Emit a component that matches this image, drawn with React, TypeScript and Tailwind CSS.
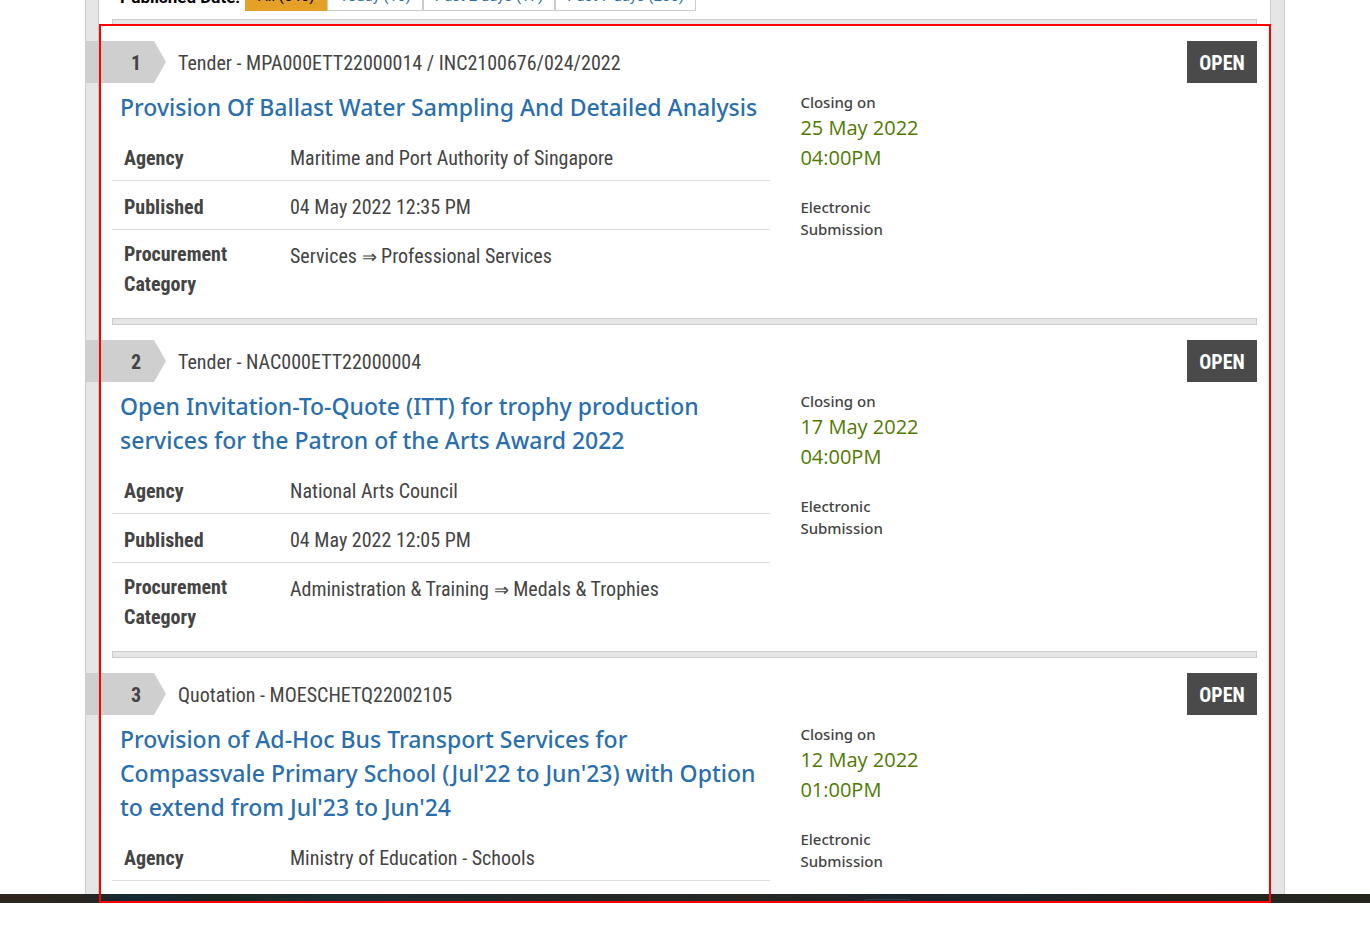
import React from "react";

type Tender = {
  no: number;
  ref: string;
  title: string;
  agency: string;
  published?: string;
  category?: [string, string];
  date: string;
  time: string;
};

const tenders: Tender[] = [
  {
    no: 1,
    ref: "Tender - MPA000ETT22000014 / INC2100676/024/2022",
    title: "Provision Of Ballast Water Sampling And Detailed Analysis",
    agency: "Maritime and Port Authority of Singapore",
    published: "04 May 2022 12:35 PM",
    category: ["Services", "Professional Services"],
    date: "25 May 2022",
    time: "04:00PM",
  },
  {
    no: 2,
    ref: "Tender - NAC000ETT22000004",
    title: "Open Invitation-To-Quote (ITT) for trophy production services for the Patron of the Arts Award 2022",
    agency: "National Arts Council",
    published: "04 May 2022 12:05 PM",
    category: ["Administration & Training", "Medals & Trophies"],
    date: "17 May 2022",
    time: "04:00PM",
  },
  {
    no: 3,
    ref: "Quotation - MOESCHETQ22002105",
    title: "Provision of Ad-Hoc Bus Transport Services for Compassvale Primary School (Jul'22 to Jun'23) with Option to extend from Jul'23 to Jun'24",
    agency: "Ministry of Education - Schools",
    date: "12 May 2022",
    time: "01:00PM",
  },
];

const filters = [
  { label: "All (646)", active: true },
  { label: "Today (16)", active: false },
  { label: "Past 2 days (17)", active: false },
  { label: "Past 7 days (266)", active: false },
];

function Separator() {
  return <div className="h-[7px] border border-[#cccccc] bg-[#e6e6e6]" />;
}

function TenderItem({ item }: { item: Tender }) {
  return (
    <article>
      <Separator />
      <header className="mt-[15px] flex h-[42px] items-center text-xl">
        <span className="-ml-[26px] flex h-full w-20 items-center bg-[#cfcfcf] pt-0.5 pl-[45px] font-bold [clip-path:polygon(0_0,85%_0,100%_50%,85%_100%,0_100%)]">
          {item.no}
        </span>
        <span className="ml-3 flex-1 pt-0.5">{item.ref}</span>
        <span className="flex h-full w-[70px] items-center justify-center bg-[#4a4a4a] pt-0.5 font-bold text-white">OPEN</span>
      </header>
      <div className="mt-[7px] flex">
        <div className="w-[57.5%]">
          <h2 className="pl-2 font-['Noto_Sans',sans-serif] text-[23px] leading-[34px] font-medium">
            <a href="#" className="text-[#2a6fad]">{item.title}</a>
          </h2>
          <table className="mt-2 w-full text-left text-xl leading-[30px]">
            <tbody>
              <tr className="border-b border-[#dddddd]">
                <th scope="row" className="w-[170px] px-3 pt-[11px] pb-[7px] align-top font-bold">Agency</th>
                <td className="px-2 pt-[11px] pb-[7px] align-top">{item.agency}</td>
              </tr>
              {item.published && (
                <tr className="border-b border-[#dddddd]">
                  <th scope="row" className="px-3 pt-[11px] pb-[7px] font-bold">Published</th>
                  <td className="px-2 pt-[11px] pb-[7px]">{item.published}</td>
                </tr>
              )}
              {item.category && (
                <tr>
                  <th scope="row" className="px-3 pt-[9px] pb-[19px] align-top font-bold">Procurement Category</th>
                  <td className="px-2 pt-[11px] align-top">
                    {item.category[0]} <span className="font-['Liberation_Serif',serif] text-lg leading-none">⇒</span> {item.category[1]}
                  </td>
                </tr>
              )}
            </tbody>
          </table>
        </div>
        <div className="ml-[30px] w-[124px] pt-px font-['Noto_Sans',sans-serif] text-[15px] leading-[22px] font-medium">
          <p>Closing on</p>
          <p className="font-['Open_Sans',sans-serif] text-xl leading-[30px] font-normal text-[#507a00]">
            {item.date} {item.time}
          </p>
          <p className="mt-[23px]">Electronic Submission</p>
        </div>
      </div>
    </article>
  );
}

export default function App() {
  return (
    <div className="bg-white font-['Roboto_Condensed','Roboto',sans-serif] text-[#444444]">
      <div className="relative mx-auto max-w-[1200px] border-x border-[#cccccc] bg-[#e6e6e6] pr-[13px] pl-3">
        <main className="border-x border-[#cccccc] bg-white px-[13px] pb-[13px]">
          <nav className="flex h-[11px] items-end overflow-hidden pl-2 font-['Roboto',sans-serif] text-[15px] leading-7 text-[#2a6fad]">
            <span className="w-[125px] text-[17px] font-bold text-black">Published Date:</span>
            {filters.map((f) => (
              <a
                key={f.label}
                href="#"
                className={
                  f.active
                    ? "border border-[#e5a028] bg-[#e5a028] px-3 text-black"
                    : "border border-[#cccccc] bg-white px-[11px]"
                }
              >
                {f.label}
              </a>
            ))}
          </nav>
          <div className="mt-2">
            {tenders.map((t) => (
              <TenderItem key={t.no} item={t} />
            ))}
          </div>
        </main>
        <div className="pointer-events-none absolute top-6 right-[13px] -bottom-[9px] left-[13px] border-2 border-[#ff0000]" />
      </div>
      <footer className="flex h-[9px] items-end bg-[linear-gradient(to_right,#2d261e,#2a2520_6%,#152a36_9%,#182a34_12%,#1a2822_16%,#1b3035_24%,#22292a_38%,#282722_55%,#1b2630_66%,#1c2832_72%,#22251f_84%,#26261f)]">
        <div className="ml-[63%] h-1 w-12 rounded-t-md border border-b-0 border-[#35424a]" />
      </footer>
    </div>
  );
}
